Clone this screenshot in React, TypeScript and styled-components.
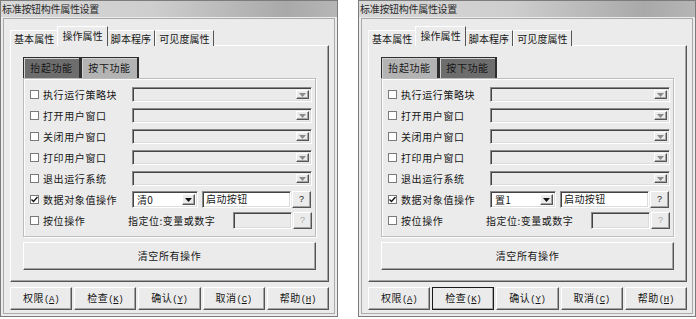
import React from "react";
import styled, { createGlobalStyle, css } from "styled-components";

const GlobalStyle = createGlobalStyle`
  html, body {
    margin: 0;
    padding: 0;
    background: #fff;
  }
  body {
    font-family: "Noto Sans CJK SC", "Liberation Sans", sans-serif;
    font-size: 10px;
    color: #161616;
  }
`;

const raised = css`
  border-top: 1px solid #fff;
  border-left: 1px solid #fff;
  border-right: 1px solid #555;
  border-bottom: 1px solid #555;
  box-shadow: inset -1px -1px 0 #a4a4a4;
`;

const sunken = css`
  border-top: 1px solid #8a8a8a;
  border-left: 1px solid #8a8a8a;
  border-right: 1px solid #fff;
  border-bottom: 1px solid #fff;
  box-shadow: inset 1px 1px 0 #444, inset -1px -1px 0 #dcdcdc;
`;

const Page = styled.div`
  display: flex;
  gap: 20px;
  width: 696px;
  height: 319px;
`;

const Window = styled.div`
  width: 338px;
  height: 317px;
  box-sizing: border-box;
  border: 1px solid #7c7c7c;
  background: #ebebeb;
  display: flex;
  flex-direction: column;
`;

const TitleBar = styled.div`
  height: 16px;
  line-height: 15px;
  padding-left: 1px;
  letter-spacing: -0.3px;
  color: #2a2a2a;
  background: linear-gradient(to right, #d8d8d8 0%, #cecece 45%, #a9a9a9 85%, #b6b6b6 100%);
`;

const Client = styled.div`
  flex: 1;
  margin: 1px 2px 2px;
  border: 1px solid #ababab;
  padding: 8px 5px 2px 6px;
  display: flex;
  flex-direction: column;
`;

const TabRow = styled.div`
  display: flex;
  align-items: flex-end;
  height: 19px;
  position: relative;
  z-index: 1;
  margin-bottom: -1px;
`;

const Tab = styled.div<{ $active?: boolean }>`
  box-sizing: border-box;
  height: ${(p) => (p.$active ? 20 : 16)}px;
  line-height: ${(p) => (p.$active ? 17 : 15)}px;
  padding: 0 ${(p) => (p.$active ? 4 : 3)}px;
  margin: 0 ${(p) => (p.$active ? -1 : 0)}px;
  letter-spacing: 0.1px;
  background: #ebebeb;
  border-top: 1px solid #fff;
  border-left: 1px solid #fff;
  border-right: 1px solid #555;
  position: relative;
  z-index: ${(p) => (p.$active ? 2 : 1)};
`;

const Panel = styled.div`
  ${raised};
  padding: 11px 12px 11px 12px;
  display: flex;
  flex-direction: column;
`;

const SubTabRow = styled.div`
  display: flex;
  height: 21px;
`;

const SubTab = styled.div<{ $active?: boolean }>`
  box-sizing: border-box;
  width: 58px;
  height: 21px;
  line-height: 19px;
  text-align: center;
  letter-spacing: 0.6px;
  border: 1px solid #2e2e2e;
  border-right-width: 2px;
  border-bottom-width: 0;
  box-shadow: inset 1px 1px 0 #d2d2d2;
  background: ${(p) => (p.$active ? "#6d6d6d" : "#b3b3b3")};
  color: #161616;
`;

const Group = styled.div`
  height: 159px;
  box-sizing: border-box;
  border: 1px solid #bcbcbc;
  box-shadow: inset 1px 1px 0 #fff, 1px 1px 0 #fff;
  padding: 7px 2px 6px 6px;
  display: flex;
  flex-direction: column;
  gap: 4px;
`;

const Row = styled.div`
  display: flex;
  align-items: center;
  height: 17px;
`;

const CheckLabel = styled.div`
  display: flex;
  align-items: center;
  gap: 4px;
  width: 102px;
  letter-spacing: 0.6px;
  flex-shrink: 0;
`;

const Box = styled.div`
  width: 9px;
  height: 9px;
  box-sizing: border-box;
  background: #fff;
  border: 1px solid #7a7a7a;
  display: flex;
  align-items: center;
  justify-content: center;
`;

const Combo = styled.div<{ $w: number; $h?: number; $white?: boolean }>`
  ${sunken};
  box-sizing: border-box;
  width: ${(p) => p.$w}px;
  height: ${(p) => p.$h ?? 15}px;
  background: ${(p) => (p.$white ? "#fff" : "#ebebeb")};
  display: flex;
  align-items: center;
  justify-content: space-between;
  padding: 2px;
  flex-shrink: 0;
`;

const ComboText = styled.span`
  padding-left: 2px;
  letter-spacing: 0.3px;
`;

const DropBtn = styled.div`
  ${raised};
  box-sizing: border-box;
  width: 13px;
  height: 100%;
  background: #ebebeb;
  display: flex;
  align-items: center;
  justify-content: center;
`;

const TextBox = styled.div<{ $w: number; $disabled?: boolean }>`
  ${sunken};
  box-sizing: border-box;
  width: ${(p) => p.$w}px;
  height: 17px;
  line-height: 14px;
  padding-left: 3px;
  letter-spacing: 0.4px;
  background: ${(p) => (p.$disabled ? "#ebebeb" : "#fff")};
  flex-shrink: 0;
`;

const SmallBtn = styled.div<{ $disabled?: boolean }>`
  ${raised};
  box-sizing: border-box;
  width: 19px;
  height: 17px;
  line-height: 15px;
  text-align: center;
  font-family: "Liberation Sans", sans-serif;
  font-size: 9px;
  color: ${(p) => (p.$disabled ? "#a8a8a8" : "#1e1e1e")};
  background: #ebebeb;
  flex-shrink: 0;
`;

const BitHint = styled.span`
  width: 105px;
  margin-left: -4px;
  letter-spacing: 0.5px;
  flex-shrink: 0;
`;

const ClearButton = styled.div`
  ${raised};
  margin-top: 5px;
  height: 28px;
  box-sizing: border-box;
  line-height: 25px;
  text-align: center;
  letter-spacing: 0.6px;
  background: #ebebeb;
`;

const ButtonBar = styled.div`
  display: flex;
  gap: 2px;
  margin-top: 5px;
  height: 23px;
`;

const DlgButton = styled.div<{ $focused?: boolean }>`
  ${raised};
  flex: 1;
  box-sizing: border-box;
  line-height: 20px;
  text-align: center;
  letter-spacing: 0.5px;
  background: #ebebeb;
  ${(p) =>
    p.$focused &&
    css`
      outline: 1px solid #1a1a1a;
      outline-offset: -1px;
      border-right-color: #222;
      border-bottom-color: #222;
    `}
`;

const Key = styled.span`
  font-family: "Liberation Mono", monospace;
  font-size: 9px;
  letter-spacing: -0.3px;
`;

const Under = styled.span`
  text-decoration: underline;
`;

const Arrow = ({ dark }: { dark?: boolean }) => (
  <svg width="7" height="4" viewBox="0 0 7 4">
    <path d="M0 0h7L3.5 4z" fill={dark ? "#111" : "#8a8a8a"} />
  </svg>
);

const Check = ({ on }: { on?: boolean }) => (
  <Box>
    {on && (
      <svg width="7" height="7" viewBox="0 0 7 7">
        <path d="M0.5 3.5l2 2 4-4.5" stroke="#111" strokeWidth="1.4" fill="none" />
      </svg>
    )}
  </Box>
);

const actions = ["执行运行策略块", "打开用户窗口", "关闭用户窗口", "打印用户窗口", "退出运行系统"];

const buttons: [string, string][] = [
  ["权限", "A"],
  ["检查", "K"],
  ["确认", "Y"],
  ["取消", "C"],
  ["帮助", "H"],
];

type DialogProps = {
  pressed: boolean;
  valueOp: string;
  focusIndex?: number;
};

const Dialog = ({ pressed, valueOp, focusIndex }: DialogProps) => (
  <Window>
    <TitleBar>标准按钮构件属性设置</TitleBar>
    <Client>
      <TabRow>
        <Tab>基本属性</Tab>
        <Tab $active>操作属性</Tab>
        <Tab>脚本程序</Tab>
        <Tab>可见度属性</Tab>
      </TabRow>
      <Panel>
        <SubTabRow>
          <SubTab $active={!pressed}>抬起功能</SubTab>
          <SubTab $active={pressed}>按下功能</SubTab>
        </SubTabRow>
        <Group>
          {actions.map((a) => (
            <Row key={a}>
              <CheckLabel>
                <Check />
                {a}
              </CheckLabel>
              <Combo $w={180}>
                <span />
                <DropBtn>
                  <Arrow />
                </DropBtn>
              </Combo>
            </Row>
          ))}
          <Row>
            <CheckLabel>
              <Check on />
              数据对象值操作
            </CheckLabel>
            <Combo $w={66} $h={17} $white>
              <ComboText>{valueOp}</ComboText>
              <DropBtn>
                <Arrow dark />
              </DropBtn>
            </Combo>
            <TextBox $w={89} style={{ marginLeft: 4 }}>
              启动按钮
            </TextBox>
            <SmallBtn style={{ marginLeft: 1 }}>?</SmallBtn>
          </Row>
          <Row>
            <CheckLabel>
              <Check />
              按位操作
            </CheckLabel>
            <BitHint>指定位:变量或数字</BitHint>
            <TextBox $w={59} $disabled />
            <SmallBtn $disabled style={{ marginLeft: 1 }}>
              ?
            </SmallBtn>
          </Row>
        </Group>
        <ClearButton>清空所有操作</ClearButton>
      </Panel>
      <ButtonBar>
        {buttons.map(([label, key], i) => (
          <DlgButton key={key} $focused={i === focusIndex}>
            {label}
            <Key>
              (<Under>{key}</Under>)
            </Key>
          </DlgButton>
        ))}
      </ButtonBar>
    </Client>
  </Window>
);

export default function App() {
  return (
    <>
      <GlobalStyle />
      <Page>
        <Dialog pressed={false} valueOp="清0" />
        <Dialog pressed valueOp="置1" focusIndex={1} />
      </Page>
    </>
  );
}
